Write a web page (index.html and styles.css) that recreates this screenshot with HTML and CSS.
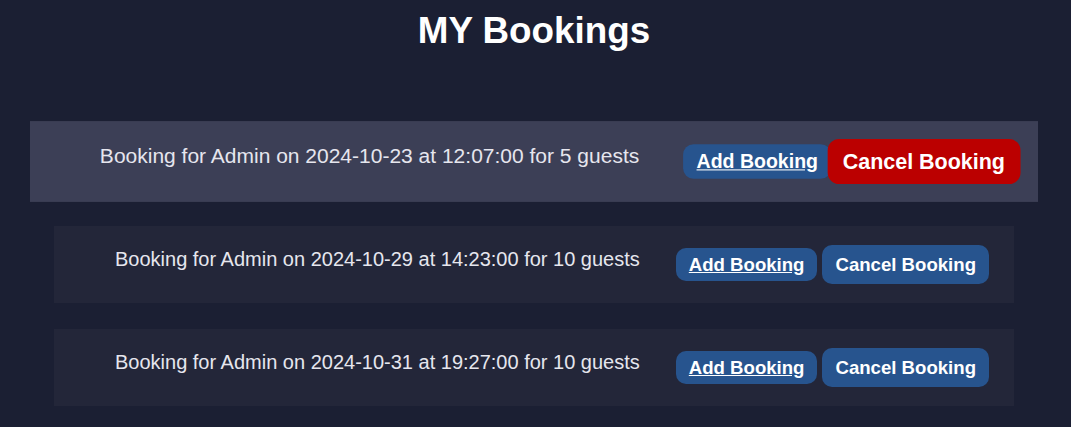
FILE: index.html
```html
<!DOCTYPE html>
<html lang="en">
<head>
<meta charset="utf-8">
<title>MY Bookings</title>
<link rel="stylesheet" href="styles.css">
</head>
<body>
<div class="page">
  <h1 class="title">MY Bookings</h1>
  <ul class="bookings">
    <li class="booking is-hover">
      <p class="booking-text">Booking for Admin on 2024-10-23 at 12:07:00 for 5 guests</p>
      <div class="actions">
        <a class="btn btn-add" href="#">Add Booking</a>
        <button class="btn btn-cancel is-hover" type="button">Cancel Booking</button>
      </div>
    </li>
    <li class="booking">
      <p class="booking-text">Booking for Admin on 2024-10-29 at 14:23:00 for 10 guests</p>
      <div class="actions">
        <a class="btn btn-add" href="#">Add Booking</a>
        <button class="btn btn-cancel" type="button">Cancel Booking</button>
      </div>
    </li>
    <li class="booking">
      <p class="booking-text">Booking for Admin on 2024-10-31 at 19:27:00 for 10 guests</p>
      <div class="actions">
        <a class="btn btn-add" href="#">Add Booking</a>
        <button class="btn btn-cancel" type="button">Cancel Booking</button>
      </div>
    </li>
  </ul>
</div>
</body>
</html>
```

FILE: styles.css
```css
html, body {
  margin: 0;
  padding: 0;
  background: #1b1f33;
  height: 100%;
}

body {
  font-family: "Liberation Sans", Arial, sans-serif;
  color: #e6e6ee;
  overflow: hidden;
}

.page {
  width: 1068px;
  display: flex;
  flex-direction: column;
  align-items: center;
}

.title {
  margin: 10px 0 0;
  font-size: 36.8px;
  font-weight: bold;
  color: #ffffff;
  line-height: 41px;
}

.bookings {
  list-style: none;
  margin: 72px 0 0;
  padding: 0;
  width: 960px;
}

.booking {
  display: flex;
  align-items: center;
  box-sizing: border-box;
  height: 77px;
  padding: 0 25px;
  margin-bottom: 26px;
  background: #232639;
}

.booking.is-hover {
  background: #3c3f56;
  transform: scale(1.05);
}

.booking-text {
  flex: 1;
  margin: 0 0 10px;
  text-align: center;
  font-size: 20px;
  line-height: 23px;
}

.actions {
  display: flex;
  align-items: center;
  gap: 5px;
}

.btn {
  font-family: "Liberation Sans", Arial, sans-serif;
  font-weight: bold;
  font-size: 18.6px;
  line-height: 21px;
  color: #ffffff;
  background: #27548e;
  border: none;
  border-radius: 10px;
  padding: 0 13px;
  box-sizing: border-box;
}

.btn-add {
  display: inline-block;
  height: 33px;
  padding-top: 6px;
  text-decoration: underline;
}

.btn-cancel {
  height: 39px;
  position: relative;
}

.btn-cancel.is-hover {
  background: #bb0000;
  transform: scale(1.1);
  z-index: 1;
}
```
